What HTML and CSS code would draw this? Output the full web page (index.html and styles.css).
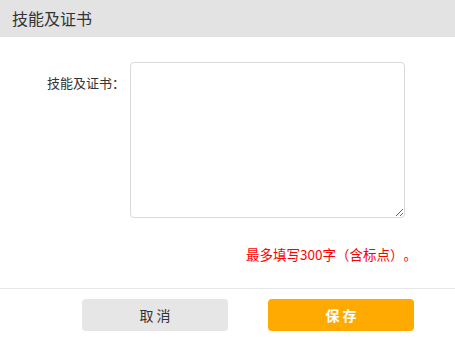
FILE: index.html
```html
<!DOCTYPE html>
<html lang="zh">
<head>
<meta charset="utf-8">
<link rel="stylesheet" href="styles.css">
</head>
<body>
<div class="dialog">
  <div class="header">技能及证书</div>
  <div class="body">
    <div class="row">
      <label class="label" for="skills">技能及证书：</label>
      <textarea id="skills" class="input"></textarea>
    </div>
    <div class="hint">最多填写300字（含标点）。</div>
  </div>
  <div class="footer">
    <button class="btn btn-cancel">取 消</button>
    <button class="btn btn-save">保 存</button>
  </div>
</div>
</body>
</html>
```
FILE: styles.css
```css
html, body {
  margin: 0;
  padding: 0;
  background: #fff;
}
body {
  font-family: "Noto Sans CJK SC", "Noto Sans", sans-serif;
  color: #333;
  text-spacing-trim: space-all;
}
.dialog {
  width: 455px;
  height: 337px;
  display: flex;
  flex-direction: column;
}
.header {
  height: 37px;
  background: #e3e3e3;
  font-size: 16px;
  line-height: 36px;
  padding-left: 12px;
  color: #333;
}
.body {
  padding-top: 25px;
  height: 252px;
  box-sizing: border-box;
  border-bottom: 1px solid #e6e6e6;
}
.row {
  display: flex;
  align-items: flex-start;
}
.label {
  width: 130px;
  text-align: right;
  font-family: "Noto Sans CJK JP", "Noto Sans CJK SC", sans-serif;
  font-size: 13px;
  line-height: 18px;
  margin-top: 12px;
  padding-right: 5px;
  box-sizing: border-box;
  color: #333;
}
.input {
  width: 275px;
  height: 156px;
  margin: 0;
  box-sizing: border-box;
  border: 1px solid #d9d9d9;
  border-radius: 4px;
  resize: both;
  outline: none;
  font-family: inherit;
}
.hint {
  text-align: right;
  padding-right: 38px;
  margin-top: 26px;
  color: #ff0000;
  font-size: 13.5px;
  line-height: 20px;
}
.footer {
  display: flex;
  gap: 40px;
  padding-left: 82px;
  padding-top: 10px;
}
.btn {
  width: 146px;
  height: 32px;
  border: none;
  border-radius: 4px;
  font-family: inherit;
  font-size: 14px;
  padding: 0;
  cursor: pointer;
  white-space: pre;
}
.btn-cancel {
  background: #e6e6e6;
  color: #333;
}
.btn-save {
  background: #ffaa00;
  color: #fff;
  font-weight: bold;
}
```
